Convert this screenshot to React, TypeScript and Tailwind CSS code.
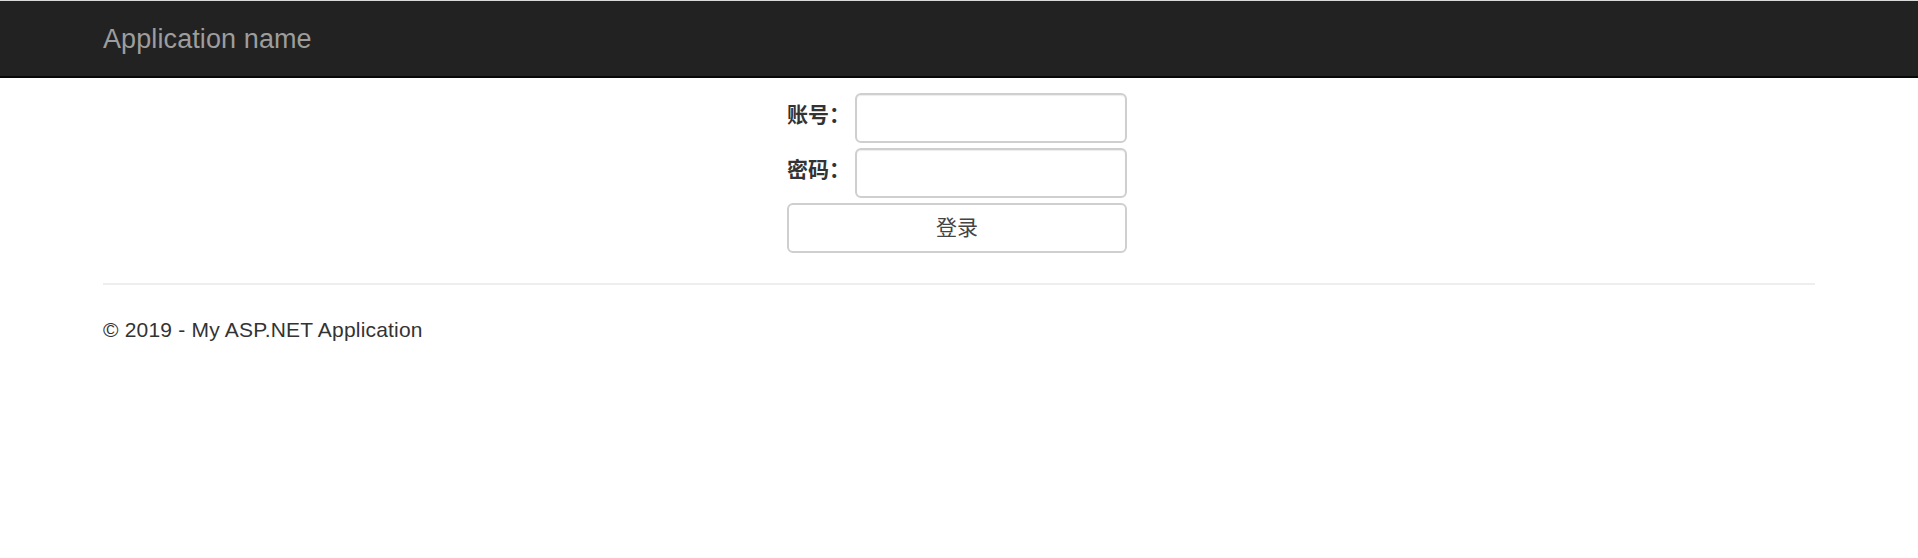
import React from 'react';

const App: React.FC = () => {
  return (
    <div
      className="min-h-[558px] bg-white text-[#333] text-[21px] leading-[30px]"
      style={{ fontFamily: '"Liberation Sans", "Noto Sans CJK SC", sans-serif' }}
    >
      {/* Navbar */}
      <nav className="border-t border-[#d9d9d9] border-b-2 border-b-[#080808] bg-[#222]">
        <div className="h-[75px] px-[103px] flex items-start">
          <a className="pt-[23px] text-[27px] leading-[30px] text-[#9d9d9d] tracking-[0.1px]" href="#">
            Application name
          </a>
        </div>
      </nav>

      {/* Login form */}
      <div className="flex justify-center pr-[4px] mt-[15px]">
        <div className="grid grid-cols-[63px_272px] gap-x-[5px] gap-y-[5px]">
          <div className="flex items-center pb-[6px] font-bold">账号：</div>
          <input
            type="text"
            className="h-[50px] w-[272px] rounded-[6px] border-2 border-[#cfcfcf] bg-white px-3 outline-none shadow-[inset_0_1px_1px_rgba(0,0,0,0.075)]"
          />
          <div className="flex items-center pb-[6px] font-bold">密码：</div>
          <input
            type="password"
            className="h-[50px] w-[272px] rounded-[6px] border-2 border-[#cfcfcf] bg-white px-3 outline-none shadow-[inset_0_1px_1px_rgba(0,0,0,0.075)]"
          />
          <button
            type="button"
            className="col-span-2 h-[50px] rounded-[6px] border-2 border-[#cfcfcf] bg-white text-[21px] text-[#444]"
          >
            登录
          </button>
        </div>
      </div>

      {/* Footer */}
      <div className="px-[103px]">
        <hr className="mt-[30px] mb-[30px] border-0 border-t-2 border-[#eee]" />
        <footer>
          <p className="tracking-[0.2px]">© 2019 - My ASP.NET Application</p>
        </footer>
      </div>
    </div>
  );
};

export default App;
